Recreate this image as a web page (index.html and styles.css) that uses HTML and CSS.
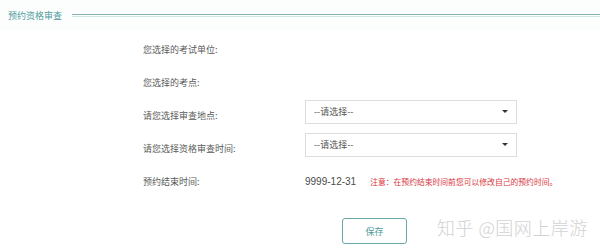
FILE: index.html
```html
<!DOCTYPE html>
<html lang="zh-CN">
<head>
  <meta charset="UTF-8">
  <title>预约资格审查</title>
  <link rel="stylesheet" href="styles.css">
</head>
<body>

  <div class="panel-title">
    <span>预约资格审查</span>
    <div class="title-line"></div>
  </div>

  <div class="form">
    <div class="row">
      <div class="label">您选择的考试单位:</div>
      <div class="value"></div>
    </div>
    <div class="row">
      <div class="label">您选择的考点:</div>
      <div class="value"></div>
    </div>
    <div class="row">
      <div class="label">请您选择审查地点:</div>
      <div class="value">
        <div class="select">
          <span>--请选择--</span>
          <span class="caret"></span>
        </div>
      </div>
    </div>
    <div class="row">
      <div class="label">请您选择资格审查时间:</div>
      <div class="value">
        <div class="select">
          <span>--请选择--</span>
          <span class="caret"></span>
        </div>
      </div>
    </div>
    <div class="row">
      <div class="label">预约结束时间:</div>
      <div class="value">
        <span class="date">9999-12-31</span>
        <span class="note">注意：在预约结束时间前您可以修改自己的预约时间。</span>
      </div>
    </div>
  </div>

  <div class="actions">
    <button class="btn-save">保存</button>
  </div>

  <div class="watermark">知乎 @国网上岸游</div>

</body>
</html>
```

FILE: styles.css
```css
body {
  margin: 0;
  width: 600px;
  height: 251px;
  position: relative;
  background: #fff;
  font-family: "Noto Sans CJK SC", "Liberation Sans", sans-serif;
  color: #555;
  overflow: hidden;
}
.panel-title {
  display: flex;
  align-items: center;
  gap: 10px;
  height: 30px;
  padding-left: 8px;
  background: #fcfefe;
}
.panel-title span {
  font-size: 9px;
  color: #4e9a9a;
}
.title-line {
  flex: 1;
  height: 1px;
  border-top: 1px solid #86b3b3;
  border-bottom: 1px solid #d3e6e6;
}
.form {
  padding-top: 2.5px;
  padding-left: 143px;
}
.row {
  display: flex;
  height: 33px;
  align-items: center;
}
.label {
  width: 162px;
  font-size: 9px;
  color: #5a5a5a;
}
.value {
  display: flex;
  align-items: center;
  height: 100%;
}
.select {
  align-self: flex-start;
  margin-top: 1px;
  box-sizing: border-box;
  width: 212px;
  height: 24px;
  border: 1px solid #ddd;
  display: flex;
  align-items: center;
  justify-content: space-between;
  padding: 0 8px 0 8px;
  font-size: 9px;
  color: #555;
}
.caret {
  width: 0;
  height: 0;
  border-left: 3px solid transparent;
  border-right: 3px solid transparent;
  border-top: 3px solid #333;
}
.date {
  font-family: "Liberation Sans", sans-serif;
  font-size: 10px;
  color: #4a4a4a;
  margin-right: 14px;
}
.note {
  font-size: 7.8px;
  color: #d9363e;
}
.actions {
  padding-top: 18px;
  padding-left: 342px;
}
.btn-save {
  width: 65px;
  height: 26px;
  background: #fff;
  border: 1px solid #6aa9a9;
  border-radius: 3px;
  font-family: "Noto Sans CJK SC", sans-serif;
  font-size: 9px;
  color: #4e9a9a;
  padding: 0;
}
.watermark {
  position: absolute;
  left: 437px;
  top: 214px;
  font-size: 18px;
  font-weight: 300;
  color: #d2d2d2;
  letter-spacing: 0.5px;
  white-space: nowrap;
}
```
